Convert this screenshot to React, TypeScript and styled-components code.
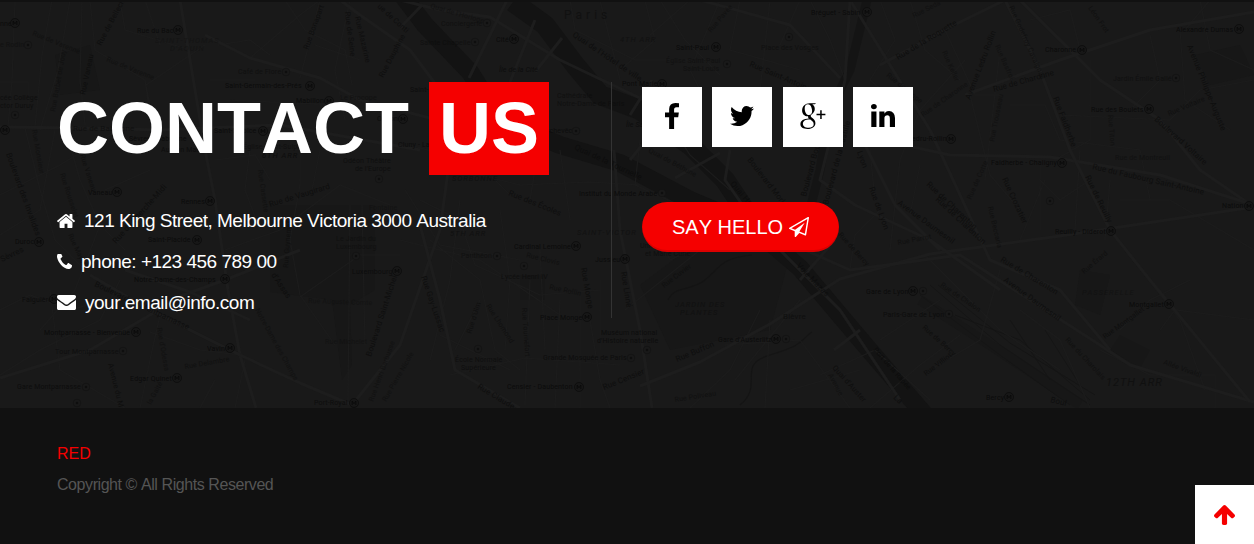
import React from "react";
import styled, { createGlobalStyle } from "styled-components";

const GlobalStyle = createGlobalStyle`
  * { box-sizing: border-box; }
  body {
    margin: 0;
    background: #111;
    color: #fff;
    font-family: "Liberation Sans", Arial, sans-serif;
    font-kerning: none;
  }
`;

const Page = styled.div`
  height: 544px;
  display: flex;
  flex-direction: column;
  overflow: hidden;
`;

const ContactSection = styled.section`
  position: relative;
  height: 408px;
  background: #191919;
  border-top: 2px solid #111;
  overflow: hidden;
`;

const MapCanvas = styled.svg`
  position: absolute;
  left: 0;
  top: -2px;
  font-family: Roboto, sans-serif;
`;

const Columns = styled.div`
  position: relative;
  display: flex;
  padding: 80px 0 0 57px;
`;

const Details = styled.div`
  width: 555px;
  height: 236px;
  border-right: 1px solid #333;
`;

const Heading = styled.h1`
  margin: 0;
  padding-top: 5px;
  font-size: 72px;
  line-height: 83px;
  font-weight: 700;
  white-space: nowrap;
`;

const Highlight = styled.span`
  padding: 6px 10px 7px;
  background: #f50000;
`;

const ContactList = styled.ul`
  list-style: none;
  margin: 30px 0 0;
  padding: 0;
`;

const ContactItem = styled.li`
  display: flex;
  align-items: center;
  gap: 9px;
  height: 41px;
  font-size: 19px;
  letter-spacing: -0.5px;
  white-space: nowrap;
`;

const Actions = styled.div`
  padding: 5px 0 0 30px;
`;

const SocialRow = styled.div`
  display: grid;
  grid-template-columns: 60px 60px 60px 60px;
  column-gap: 10.4px;
`;

const SocialLink = styled.a`
  display: flex;
  align-items: center;
  justify-content: center;
  height: 60px;
  padding-bottom: 3px;
  background: #fff;
  color: #000;
`;

const HelloButton = styled.button`
  display: flex;
  align-items: center;
  gap: 6px;
  margin-top: 55px;
  width: 197px;
  height: 50px;
  padding: 0 0 0 30px;
  border: 0;
  border-radius: 25px;
  background: #f50000;
  box-shadow: inset 0 -2px 0 rgba(0, 0, 0, 0.1);
  color: #fff;
  font: 20px "Liberation Sans", Arial, sans-serif;
  font-kerning: none;
  white-space: nowrap;
`;

const Footer = styled.footer`
  flex: 1;
  padding: 30px 57px;
  background: #111;
  font-size: 16px;
  line-height: 31px;
  letter-spacing: -0.43px;
`;

const Brand = styled.div`
  color: #f50000;
  letter-spacing: 0;
`;

const Copyright = styled.div`
  color: #555;
`;

const TopButton = styled.a`
  position: fixed;
  right: 0;
  bottom: 0;
  display: flex;
  align-items: center;
  justify-content: center;
  width: 59px;
  height: 59px;
  background: #fff;
  color: #f50000;
`;

const Glyph = styled.svg`
  display: block;
  flex: none;
  fill: currentColor;
`;

const icons = {
  home: "M1472 992v480q0 26-19 45t-45 19h-384v-384h-256v384h-384q-26 0-45-19t-19-45v-480q0-1 .5-3t.5-3l575-474 575 474q1 2 1 6zm223-69l-62 74q-8 9-21 11h-3q-13 0-21-7l-692-577-692 577q-12 8-24 7-13-2-21-11l-62-74q-8-10-7-23.5t11-21.5l719-599q32-26 76-26t76 26l244 204v-195q0-14 9-23t23-9h192q14 0 23 9t9 23v408l219 182q10 8 11 21.5t-7 23.5z",
  phone: "M1600 1240q0 27-10 70.5t-21 68.5q-21 50-122 106-94 51-186 51-27 0-53-3.5t-57.5-12.5-47-14.5-55.5-20.5-49-18q-98-35-175-83-127-79-264-216t-216-264q-48-77-83-175-3-9-18-49t-20.5-55.5-14.5-47-12.5-57.5-3.5-53q0-92 51-186 56-101 106-122 25-11 68.5-21t70.5-10q14 0 21 3 18 6 53 76 11 19 30 54t35 63.5 31 53.5q3 4 17.5 25t21.5 35.5 7 28.5q0 20-28.5 50t-62 55-62 53-28.5 46q0 9 5 22.5t8.5 20.5 14 24 11.5 19q76 137 174 235t235 174q2 1 19 11.5t24 14 20.5 8.5 22.5 5q18 0 46-28.5t53-62 55-62 50-28.5q14 0 28.5 7t35.5 21.5 25 17.5q25 15 53.5 31t63.5 35 54 30q70 35 76 53 3 7 3 21z",
  mail: "M1792 710v794q0 66-47 113t-113 47h-1472q-66 0-113-47t-47-113v-794q44 49 101 87 362 246 497 345 57 42 92.5 65.5t94.5 48 110 24.5h2q51 0 110-24.5t94.5-48 92.5-65.5q170-123 498-345 57-39 100-87zm0-294q0 79-49 151t-122 123q-376 261-468 325-10 7-42.5 31t-54 38.5-52 32.5-57.5 27-50 9h-2q-23 0-50-9t-57.5-27-52-32.5-54-38.5-42.5-31q-91-64-262-182.5t-205-142.5q-62-42-117-115.5t-55-136.5q0-78 41.5-130t118.5-52h1472q65 0 112.5 47t47.5 113z",
  facebook: "M1343 12v264h-157q-86 0-116 36t-30 108v189h293l-39 296h-254v759h-306v-759h-255v-296h255v-218q0-186 104-288.5t277-102.5q147 0 228 12z",
  twitter: "M1684 408q-67 98-162 167 1 14 1 42 0 130-38 259.5t-115.5 248.5-184.5 210.5-258 146-323 54.5q-271 0-496-145 35 4 78 4 225 0 401-138-105-2-188-64.5t-114-159.5q33 5 61 5 43 0 85-11-112-23-185.5-111.5t-73.5-205.5v-4q68 38 146 41-66-44-105-115t-39-154q0-88 44-163 121 149 294.5 238.5t371.5 99.5q-8-38-8-74 0-134 94.5-228.5t228.5-94.5q140 0 236 102 109-21 205-78-37 115-142 178 93-10 186-50z",
  linkedin: "M477 625v991h-330v-991h330zm21-306q1 73-50.5 122t-135.5 49h-2q-82 0-132-49t-50-122q0-74 51.5-122.5t134.5-48.5 133 48.5 51 122.5zm1166 729v568h-329v-530q0-105-40.5-164.5t-126.5-59.5q-63 0-105.5 34.5t-63.5 85.5q-11 30-11 81v553h-329q2-399 2-647t-1-296l-1-48h329v144h-2q20-32 41-56t56.5-52 87-43.5 114.5-15.5q171 0 275 113.5t104 332.5z",
  plane: "M1764 11q33 24 27 64l-256 1536q-5 29-32 45-14 8-31 8-11 0-24-5l-527-215-298 327q-18 21-47 21-14 0-23-4-19-7-30-23.5t-11-36.5v-452l-472-193q-37-14-40-55-3-39 32-59l1664-960q35-21 68 2zm-342 1499l221-1323-1434 827 336 137 863-639-478 797z",
  up: "M1675 971q0 51-37 90l-75 75q-38 38-91 38-54 0-90-38l-294-293v704q0 52-37.5 84.5t-90.5 32.5h-128q-53 0-90.5-32.5t-37.5-84.5v-704l-294 293q-36 38-90 38t-90-38l-75-75q-38-38-38-90 0-53 38-91l651-651q35-37 90-37 54 0 91 37l651 651q37 39 37 91z",
};

function Icon({ name, box, w, h }: { name: keyof typeof icons; box: string; w: number; h: number }) {
  return (
    <Glyph viewBox={box} width={w} height={h} preserveAspectRatio="none" aria-hidden>
      <path d={icons[name]} />
    </Glyph>
  );
}

function GooglePlus() {
  return (
    <Glyph width="26" height="26" viewBox="0 0 26 26" aria-hidden>
      <path
        fillRule="evenodd"
        d="M16.2.2 14.6 1.2H12.3C14 2.3 14.8 3.8 14.8 6.1c0 2.300-1.200 3.700-2.600 4.800-1.100.9-1.500 1.400-1.500 2.100s.7 1.300 1.700 2.100c2.200 1.700 3 3.100 3 5.100 0 3.200-3 5.800-7.900 5.800C3.100 26 .4 24.100.4 21.300c0-3.500 3.200-5.600 8.500-5.700-.7-.8-1-1.400-.8-2.400C4.500 13.400 2.100 10.900 2.100 7.400 2.100 3.300 5.400.2 9.600.2ZM8 1.200C5.700 1.200 4.500 3.100 4.700 5.900c.2 3.500 2 6.200 4.300 6.200 2 0 3.300-1.700 3.100-4.500C11.900 4 10.200 1.200 8 1.200ZM9.500 16.500c-4.100 0-6.600 1.500-6.600 4.200 0 2.400 2.200 4.100 5.700 4.100 3.300 0 5.100-1.400 5.100-3.600 0-1.900-1.100-2.900-3.400-4.600Z"
      />
      <path d="M20.200 7.200h1.500v3.600h3.700v1.400h-3.700v3.800h-1.500v-3.800h-3.700v-1.400h3.700Z" />
    </Glyph>
  );
}

/* Street geometry of the map backdrop. */
const avenues = [
  "M180 0 190 60 205 150 215 200 228 290 240 355 256 408",
  "M240 355 300 383 352 405 400 345 440 230 455 120",
  "M205 35 250 58 320 78 360 100 430 118",
  "M0 127 80 128 160 130 280 125 420 150",
  "M340 0 360 15 410 50 440 90 470 112",
  "M400 0 440 10 490 17 560 60 640 98 690 128",
  "M0 378 90 350 150 315 175 298 225 280 300 250",
  "M90 275 150 310 240 355",
  "M125 270 190 292 250 320",
  "M420 225 440 300 455 370 520 408",
  "M614 150 620 230 640 330 652 408",
  "M640 386 700 362 770 324 840 279 930 254 1060 236 1254 207",
  "M730 150 725 180 760 230 840 310 900 400",
  "M760 230 850 270 960 255 1100 345 1130 365 1254 402",
  "M850 0 930 130 990 260 1060 290 1110 350",
  "M1020 0 1100 80 1160 120 1200 170 1254 207",
  "M880 65 950 27 1005 0",
  "M880 140 950 155 1050 157 1160 175 1254 205",
  "M965 95 1060 60 1150 30 1254 12",
  "M1005 0 1040 70 1070 150 1110 230 1150 280 1250 402",
  "M850 0 845 80 820 180 855 205 930 240 1000 290",
  "M865 145 895 205 940 250",
  "M700 0 790 25 840 78",
];

const streets = [
  "M15 0 12 80 8 127M52 0 42 55 35 127M0 82H28V110M70 0 58 70 40 130M82 0 80 80 85 125M0 195 60 165 115 132M40 330 75 290 100 225M25 128 40 190 55 240 85 270",
  "M90 0 95 50 145 80 152 130M145 0 160 45M120 0 125 30 190 50M155 130 146 85 205 45M70 145 80 180 100 225 125 250M105 190 150 170M0 235 40 210 55 130",
  "M218 45 250 40 270 55M250 58 300 15 320 0M285 0 305 30 345 50 352 85M315 45 360 60M300 78 310 40 320 0M350 0 335 70 345 120M225 100 340 105 410 120M210 80 255 80",
  "M215 160 255 155 270 180M250 150 245 190 260 230M300 150V185L290 240 300 295 335 345M320 150 312 190M225 250 280 230 340 185 390 205M350 205 348 400M362 205 365 345",
  "M0 310 30 295 70 310 105 300M0 375 40 350 100 320 120 280M50 290 60 370 125 408M140 408 150 360 160 315M245 360 235 408M150 332 200 350 240 355M200 408 215 380M400 255H360L300 297",
  "M420 200 460 220 475 265 540 295 600 290M400 240 480 260 560 315M430 240 480 280 495 350 520 370M480 300 455 350M405 190 440 245 520 260M460 200 450 280 430 360M500 210 510 280 505 350",
  "M530 280 525 405M540 250 545 350M560 300 555 408M580 290V408M600 280V350M450 375 525 358 620 365M440 335 510 370M590 320 600 380 610 408M625 310 700 250M650 215 670 260 735 230 770 200M672 225 690 255",
  "M460 170 520 185 590 182 640 185M410 145 480 165 510 195M540 140 530 200M560 150 570 220M640 140 635 185 690 210M655 100 690 155 730 190",
  "M570 0 575 30 635 60 690 60M600 0 620 80M645 0 655 40 620 70M660 0 685 40 720 75M690 0 650 35M720 0 690 70 700 90M740 0 730 50 800 70M770 0 760 90 720 130M800 0 780 45M810 0 830 40 845 80",
  "M880 0 895 40 870 80 900 105M910 0 925 50 960 80M945 30 975 95H1000M965 60 920 110 900 160M970 95 990 175 1020 210M1000 50 985 180M1010 105H1045L1060 140 1140 150 1150 200M1090 60 1090 140 1060 157M1150 35 1160 80 1130 110M1200 0 1210 50 1254 70",
  "M1030 20 1070 10 1080 50M1180 30 1185 100 1230 130M1210 0 1185 30M1254 80 1200 90 1170 120M1110 180 1105 240M1040 160V230M1045 180 1020 240M1080 150 1075 230M1120 200H1170L1254 250M1060 115 1170 120",
  "M850 270 855 235 880 210M870 150 875 200M900 160 890 250M920 165 910 215M925 255 1000 330 1060 370M1000 270 980 340 930 370M940 300 880 340M1120 330 1150 300 1190 280M1160 330 1175 310 1254 320M1100 350 1150 375H1215V408M1020 310 1060 340 1090 408",
  "M1040 180 1060 200 1090 180M1125 250 1180 320 1205 390M760 310 730 370 690 408M725 345 800 340 850 408M770 320 765 408M800 300 735 380M790 390 860 370M820 375 875 350 930 400M870 408 920 365 960 335",
];

type Label = [number, number, string, number?, number?, number?];
/* x, y, text, rotation, font size, opacity */
const labels: Label[] = [
  [137, 33, "Rue du Bac", 0, 7, 0.9],
  [155, 43, "SAINT-THOMAS", 0, 7.500, 0.35], [170, 51, "D'AQUIN", 0, 7.500, 0.35],
  [0, 26, "nne", 0, 7, 0.9], [0, 47, "e Rodin", 0, 7, 0.5],
  [101, 46, "Rue de Bellech", -62, 7.500], [32, 35, "Rue de Varenne", 22, 7, 0.5],
  [106, 61, "Rue de Varenne", 22, 7, 0.5], [238, 74, "Café de Flore", 0, 7, 0.6],
  [225, 88, "Saint-Germain-des-Prés", 0, 7, 0.9], [296, 103, "Mabillon", 0, 7, 0.9],
  [340, 100, "Le Procope", 0, 7, 0.5], [377, 121, "Odéon", 0, 7, 0.9],
  [308, 50, "Rue Bonapart", -70, 7.500], [345, 12, "Rue de Seine", 83, 7.500, 0.7],
  [355, 17, "Rue Mazarine", 77, 7.500, 0.7], [377, 7, "ue de Conti", 42, 7.500],
  [383, 78, "Rue Dauphine", -62, 7.500, 0.7], [85, 95, "Rue Vaneau", -78, 7.500],
  [55, 112, "Rue Barbet de Jouy", -80, 7, 0.5], [0, 100, "cée Collège", 0, 7, 0.7],
  [0, 108, "ctor Duruy", 0, 7, 0.7], [73, 131, "Rue de Babylone", 0, 8, 0.6],
  [129, 141, "Sèvres - Babylone", 0, 7, 0.9], [161, 152, "Au Bon Marché", 0, 7, 0.8],
  [214, 133, "Saint-Sulpice", 0, 7, 0.9], [243, 149, "Église Saint-Sulpice", 0, 7, 0.6],
  [262, 158, "6TH ARR", 0, 7.500, 0.8], [343, 163, "Odéon Théâtre", 0, 7, 0.7],
  [355, 171, "de l'Europe", 0, 7, 0.7], [398, 147, "Cluny - La Sorbonne", 0, 7, 0.8],
  [88, 195, "Vaneau", 0, 7, 0.9], [181, 204, "Rennes", 0, 7, 0.9],
  [270, 207, "Rue de Vaugirard", -17, 8], [6, 154, "Boulevard des Invalides", 70, 8],
  [32, 130, "Rue Monsieur", 80, 7, 0.5], [60, 174, "Rue Rousselet", 72, 7, 0.5],
  [80, 155, "Rue Vaneau", 72, 7, 0.6], [258, 170, "Rue Cassette", 82, 7, 0.5],
  [15, 244, "Duroc", 0, 7, 0.9], [2, 262, "Sèvres", -26, 8, 0.7], [68, 235, "Rue Mayet", 65, 7, 0.6],
  [116, 244, "Rue du Cherche-Midi", -48, 8], [148, 242, "Saint-Placide", 0, 7, 0.9],
  [134, 282, "Notre-Dame-des-Champs", 0, 7, 0.9], [22, 302, "Falguière", 0, 7, 0.8],
  [94, 286, "Boulevard du Montparnasse", 25, 8], [44, 335, "Montparnasse - Bienvenüe", 0, 7, 0.9],
  [55, 354, "Tour Montparnasse", 0, 7, 0.7], [207, 351, "Vavin", 0, 7, 0.9],
  [130, 381, "Edgar Quinet", 0, 7, 0.9], [17, 389, "Gare Montparnasse", 0, 7, 0.8],
  [185, 369, "Rue Delambre", -10, 7, 0.6], [157, 328, "Rue d'Odessa", 80, 7, 0.5],
  [108, 364, "Avenue du M", 76, 7.500], [151, 405, "la Gaité", -62, 7, 0.6],
  [255, 310, "Notre-Dame des Champs", 61, 7, 0.5], [288, 268, "Rue Guynemer", -86, 7, 0.6],
  [271, 275, "d'Assas", 56, 8], [369, 210, "Fontaine", 0, 7, 0.4],
  [336, 241, "Le Jardin du", 0, 7, 0.5], [336, 249, "Luxembourg", 0, 7, 0.5],
  [352, 274, "Luxembourg", 0, 7, 0.8], [308, 303, "Rue Auguste Comte", 2, 7, 0.4],
  [325, 344, "Rue Michelet", 0, 7, 0.4], [371, 357, "Boulevard Saint-Michel", -72, 8],
  [314, 405, "Port-Royal", 0, 7, 0.8], [386, 402, "Rue Pierre Nicole", -60, 7, 0.5],
  [373, 402, "Rue Henri Barbusse", -70, 7, 0.5],
  [430, 8, "Quai de l'Horloge", 16, 7, 0.5], [441, 26, "Conciergerie", 0, 7, 0.6],
  [420, 45, "Sainte Chapelle", 0, 7, 0.6], [496, 42, "Cité", 0, 7, 0.95],
  [499, 72, "Île de la Cité", 0, 7, 0.8], [564, 19, "Paris", 0, 12, 0.55],
  [572, 36, "Quai de l'Hôtel de ville", 34, 8], [620, 42, "4TH ARR", 0, 7.500, 0.5],
  [676, 50, "Saint-Paul", 0, 7, 0.95], [666, 63, "Église Saint-Paul", 0, 7, 0.5],
  [683, 71, "Saint-Louis", 0, 7, 0.5], [622, 86, "Pont Marie", 0, 7, 0.95],
  [557, 98, "Cathédrale", 0, 7, 0.6], [557, 106, "Notre-Dame de Paris", 0, 7, 0.6],
  [410, 92, "Saint-Michel", 0, 7, 0.8], [537, 133, "L'Archevêché", 0, 7, 0.8],
  [626, 127, "Île Saint-Louis", 0, 7, 0.8], [574, 149, "Quai de la Tournelle", 25, 8],
  [452, 181, "SORBONNE", 0, 7.500, 0.6], [508, 195, "Rue des Écoles", 22, 8],
  [579, 196, "Institut du Monde Arabe", 0, 7, 0.9], [749, 66, "Rue Saint-Antoine", 23, 8],
  [761, 50, "Place des Vosges", 0, 7, 0.6], [711, 33, "Rue Pavée", -50, 7, 0.5],
  [811, 15, "Bréguet - Sabin", 0, 7, 0.9], [648, 152, "Quai de Béthune", 28, 7, 0.6],
  [747, 160, "Boulevard Morland", 52, 8], [730, 184, "Quai Henri IV", 50, 8],
  [806, 197, "Boulevard Bourdon", -75, 8, 0.8], [828, 205, "Boulevard de la Bastille", -75, 8, 0.8],
  [898, 60, "Rue de la Roquette", -31, 8], [914, 18, "Rue Seda", -27, 7, 0.5],
  [970, 100, "Avenue Ledru Rollin", -69, 8], [942, 52, "Rue Keller", 66, 7, 0.5],
  [994, 92, "Rue de Charonne", -16, 8], [1009, 7, "Rue Godefroy Cavaignac", 66, 7, 0.6],
  [995, 46, "Rue Basfroi", 66, 7, 0.5], [1045, 52, "Charonne", 0, 7, 0.9],
  [1088, 8, "Léon Frot", 55, 7, 0.6], [1176, 32, "Alexandre Dumas", 0, 7, 0.9],
  [1113, 81, "Jardin Émile Gallé", 0, 7, 0.6], [1091, 112, "Rue des Boulets", 0, 7, 0.95],
  [1187, 46, "Avenue Philippe-Auguste", 68, 8], [1169, 116, "Rue Voltaire", -23, 7, 0.6],
  [1154, 120, "Boulevard Voltaire", 42, 8], [1053, 98, "Rue Faidherbe", 69, 8],
  [886, 76, "Rue de Lappe", 39, 7, 0.6], [923, 117, "Rue de Charonne", -35, 7, 0.5],
  [908, 141, "Ledru-Rollin", 0, 7, 0.9], [991, 165, "Faidherbe - Chaligny", 0, 7, 0.95],
  [1115, 160, "Rue de Montreuil", 0, 7, 0.5], [1092, 169, "Rue du Faubourg Saint-Antoine", 13, 8],
  [1108, 115, "Rue Titon", 85, 7, 0.5], [994, 142, "Rue Trousseau", -79, 7, 0.5],
  [971, 200, "Rue de Cotte", -66, 7, 0.5], [1002, 179, "Rue Crozatier", 65, 8],
  [1085, 177, "Rue de Reuilly", 64, 8], [926, 185, "Rue de Charenton", 43, 8],
  [857, 152, "Lyon", 70, 8], [869, 188, "Rue de Lyon", 70, 8],
  [450, 236, "5TH ARR", 0, 7.500, 0.6], [577, 235, "SAINT-VICTOR", 0, 7.500, 0.5],
  [514, 249, "Cardinal Lemoine", 0, 7, 0.9], [461, 258, "Panthéon", 0, 7, 0.6],
  [501, 279, "Lycée Henri IV", 0, 7, 0.7], [526, 257, "Rue Clovis", 14, 7, 0.6],
  [595, 262, "Jussieu", 0, 7, 0.9], [640, 248, "Université Pierre", 0, 7, 0.7],
  [645, 256, "et Marie Curie", 0, 7, 0.7], [581, 268, "Rue Monge", 80, 8],
  [621, 272, "Rue Linné", 81, 8], [664, 288, "Rue Cuvier", -37, 7, 0.6],
  [549, 289, "Rue Rollin", 12, 7, 0.6], [421, 277, "Rue Gay-Lussac", 71, 8],
  [471, 334, "Rue d'Ulm", -72, 7, 0.6], [486, 306, "Rue Lhomond", 57, 7, 0.6],
  [522, 308, "Rue Tournefort", 86, 7, 0.6], [540, 320, "Place Monge", 0, 7, 0.95],
  [601, 335, "Muséum national", 0, 7, 0.8], [597, 343, "d'Histoire naturelle", 0, 7, 0.8],
  [675, 307, "JARDIN DES", 0, 7.500, 0.5], [680, 315, "PLANTES", 0, 7.500, 0.5],
  [783, 319, "Bièvre", 0, 8, 0.7], [718, 342, "Gare d'Austerlitz", 0, 7, 0.9],
  [543, 360, "Grande Mosquée de Paris", 0, 7, 0.8], [455, 362, "École Normale", 0, 7, 0.7],
  [461, 370, "Supérieure", 0, 7, 0.7], [507, 389, "Censier - Daubenton", 0, 7, 0.9],
  [604, 390, "Rue Censier", -22, 8], [677, 362, "Rue Buffon", -23, 8],
  [675, 402, "Rue Poliveau", -9, 7, 0.6], [477, 388, "Rue Claude", 31, 8],
  [796, 266, "Voie Mazas", 46, 8], [897, 204, "Avenue Daumesnil", 36, 8],
  [935, 200, "Rue de Charenton", 43, 8], [988, 207, "Rue Beccaria", 77, 7, 0.6],
  [898, 245, "Rue Parrot", -11, 7, 0.6], [838, 235, "Rue de Bercy", 48, 7, 0.7],
  [1055, 234, "Reuilly - Diderot", 0, 7, 0.95], [1222, 208, "Nation", 0, 7, 0.9],
  [1000, 261, "Rue de Charenton", 31, 8, 0.7], [1003, 281, "Avenue Daumesnil", 36, 8],
  [1084, 274, "Rue Érard", -40, 7, 0.6], [1082, 295, "PASSERELLE", 0, 7.500, 0.4],
  [866, 294, "Gare de Lyon", 0, 7, 0.95], [883, 317, "Paris-Gare de Lyon", 0, 7, 0.8],
  [940, 286, "Rue de Chalon", 34, 7, 0.6], [1129, 307, "Montgallet", 0, 7, 0.95],
  [1105, 339, "Rue Montgallet", -36, 7, 0.7], [922, 328, "Rue de Bercy", 42, 7, 0.7],
  [926, 376, "Rue Villiot", -37, 7, 0.7], [1065, 340, "Rue du Charolais", 47, 7, 0.6],
  [1163, 364, "Allée Vivaldi", 20, 7, 0.6], [1106, 386, "12TH ARR", 0, 11, 0.6],
  [986, 400, "Bercy", 0, 7, 0.95], [873, 350, "Port de la Rapée", 49, 7, 0.8],
  [832, 368, "Quai d'Auster", 48, 7.500], [893, 398, "La", 45, 8],
  [1050, 402, "Boul", 14, 8], [828, 375, "Avenue", 62, 7, 0.5],
];

const stations = [
  [178, 30], [15, 23], [310, 86], [329, 101], [403, 119], [263, 131], [5, 130], [117, 192], [210, 201],
  [39, 242], [197, 240], [225, 279], [54, 299], [136, 332], [230, 348], [177, 378], [397, 271],
  [354, 403], [514, 39], [716, 47], [662, 84], [867, 12], [1239, 29], [1082, 50], [1149, 109],
  [951, 139], [1062, 163], [576, 246], [625, 259], [587, 317], [579, 387], [776, 339], [1111, 231],
  [913, 291], [1169, 304], [1009, 397], [1249, 206],
];

const landmarks = [
  [28, 45], [487, 23], [475, 42], [727, 64], [789, 37], [576, 131], [662, 193], [1176, 78], [497, 256],
  [524, 266], [478, 349], [631, 358], [647, 350], [123, 351], [356, 256], [286, 72], [379, 179], [15, 115],
  [786, 339], [923, 291], [86, 387], [949, 314], [77, 403], [1050, 201],
];

const isDistrict = (text: string) => /^[0-9A-Z' -]+$/.test(text);

function CityMap() {
  return (
    <MapCanvas width="1254" height="410" viewBox="0 0 1254 410" aria-hidden>
      <g fill="#171717">
        <path d="M270 205H375V290L350 305 352 365 342 380 332 300 270 292Z" />
        <path d="M640 285 700 240 790 255 770 330 670 350Z" />
        <path d="M1120 335 1150 350 1140 368 1110 350ZM1080 270 1110 275 1100 315 1075 305ZM1195 55 1240 45 1254 75 1210 85Z" />
        <path d="M55 55 90 45 100 90 60 95ZM520 275H545V300H520Z" />
      </g>
      <g fill="none" stroke="#131313" strokeLinejoin="round">
        <path strokeWidth="18" d="M400-8 425 25 470 72 500 120 560 145 620 163 690 200 750 225 800 268 865 345 925 415" />
        <path strokeWidth="20" d="M513 2 545 25 575 65 600 95 640 110 690 145 725 180 755 225" />
        <path strokeWidth="9" d="M867 0 850 70 830 110 820 170 806 225" opacity=".7" />
        <path strokeWidth="1.200" opacity=".7" d="M668 300C675 285 690 292 705 280S720 258 752 255M740 405C765 385 735 365 770 355S800 340 812 332" />
        <path strokeWidth="10" opacity=".3" d="M920 300 990 345 1080 405" />
      </g>
      <g fill="none" stroke="#151515" strokeWidth="1">
        <path d="M930 285 1000 345 1090 405M938 285 1010 343 1095 395M920 295 1000 355 1070 405M955 315 1020 340 1090 400M1045 330 1080 385M1010 320 1050 380" />
      </g>
      <g fill="none" stroke="#1c1c1c" strokeWidth="1.200">
        {streets.map((d) => <path key={d} d={d} />)}
      </g>
      <g fill="none" stroke="#1d1d1d" strokeWidth="3" strokeLinejoin="round">
        {avenues.map((d) => <path key={d} d={d} />)}
        <path d="M535 20 510 82M507 0 469 78M422 5 400 28M562 38 535 72M652 80 630 115M642 145 630 160M720 153 675 178M860 330 834 350M835 240 800 280" />
      </g>
      <g fill="#0b0b0b">
        {labels.map(([x, y, text, angle = 0, size = 8, opacity = 0.75], i) => (
          <text
            key={i}
            transform={`translate(${x} ${y}) rotate(${angle})`}
            fontSize={size}
            opacity={opacity}
            fontStyle={isDistrict(text) || text.startsWith("Île") ? "italic" : undefined}
            letterSpacing={text === "Paris" ? 4 : isDistrict(text) ? 1 : 0.15}
          >
            {text}
          </text>
        ))}
      </g>
      {stations.map(([x, y]) => (
        <g key={`${x}-${y}`}>
          <circle cx={x} cy={y} r="4.500" fill="#171717" stroke="#0d0d0d" strokeWidth=".9" />
          <path d={`M${x - 1.8} ${y + 2}v-4l1.800 2.800 1.800-2.800v4`} fill="none" stroke="#0a0a0a" strokeWidth=".9" />
        </g>
      ))}
      {landmarks.map(([x, y]) => (
        <g key={`${x}-${y}`}>
          <circle cx={x} cy={y} r="3.800" fill="#191919" stroke="#131313" strokeWidth=".8" />
          <circle cx={x} cy={y} r="1.200" fill="#0f0f0f" />
        </g>
      ))}
    </MapCanvas>
  );
}

export default function App() {
  return (
    <Page>
      <GlobalStyle />
      <ContactSection>
        <CityMap />
        <Columns>
          <Details>
            <Heading>
              CONTACT <Highlight>US</Highlight>
            </Heading>
            <ContactList>
              <ContactItem>
                <Icon name="home" box="89 253 1614 1283" w={18} h={14} />
                121 King Street, Melbourne Victoria 3000 Australia
              </ContactItem>
              <ContactItem>
                <Icon name="phone" box="192 256 1408 1280" w={15} h={15} />
                phone: +123 456 789 00
              </ContactItem>
              <ContactItem>
                <Icon name="mail" box="0 256 1792 1408" w={19} h={15} />
                your.email@info.com
              </ContactItem>
            </ContactList>
          </Details>
          <Actions>
            <SocialRow>
              <SocialLink aria-label="Facebook"><Icon name="facebook" box="479 0 864 1664" w={14} h={26} /></SocialLink>
              <SocialLink aria-label="Twitter"><Icon name="twitter" box="108 256 1576 1280" w={24} h={20} /></SocialLink>
              <SocialLink aria-label="Google Plus"><GooglePlus /></SocialLink>
              <SocialLink aria-label="LinkedIn"><Icon name="linkedin" box="128 148 1536 1468" w={24} h={23} /></SocialLink>
            </SocialRow>
            <HelloButton>
              SAY HELLO
              <Icon name="plane" box="0 0 1792 1792" w={20} h={20} />
            </HelloButton>
          </Actions>
        </Columns>
      </ContactSection>
      <Footer>
        <Brand>RED</Brand>
        <Copyright>Copyright © All Rights Reserved</Copyright>
      </Footer>
      <TopButton aria-label="Back to top">
        <Icon name="up" box="117 185 1558 1479" w={21} h={20} />
      </TopButton>
    </Page>
  );
}
